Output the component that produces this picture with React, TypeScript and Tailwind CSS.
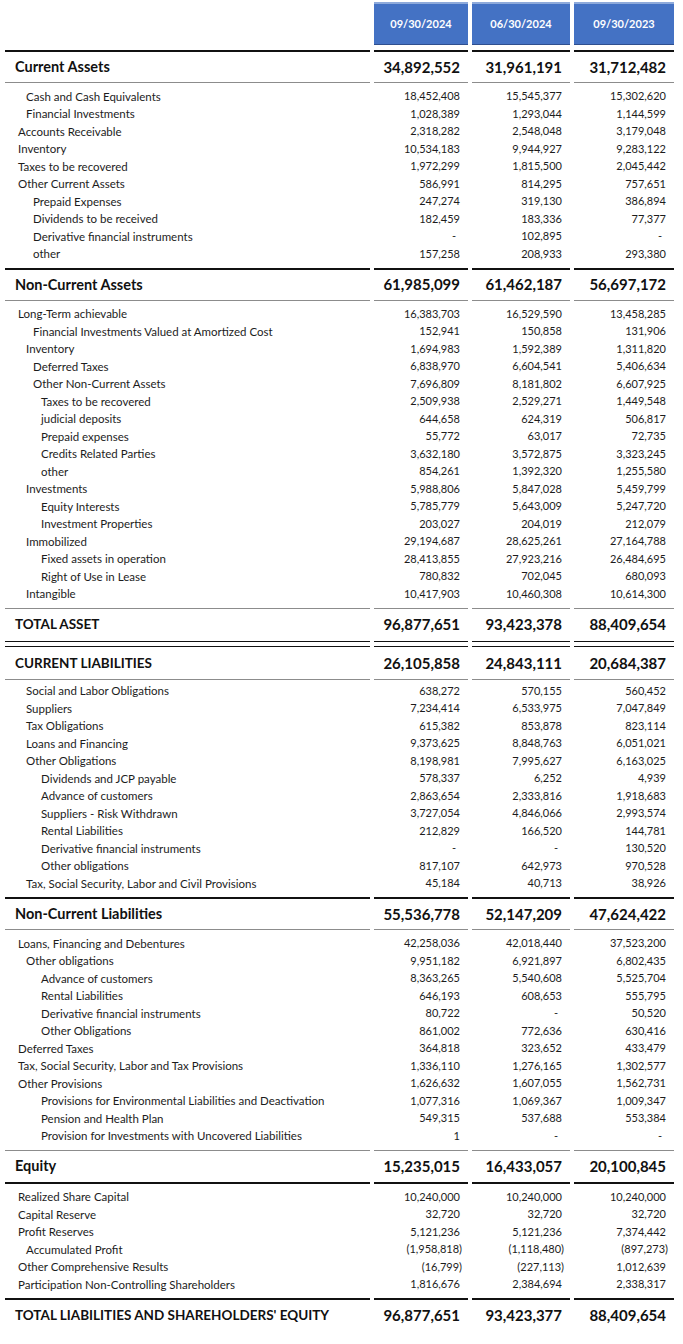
type Row = { label: string; level: number; v: string[] };
type Section = { title: string; total: string[]; top: "black" | "gray"; under: "black" | "gray"; rows: Row[] };

const COLS = "grid grid-cols-[365px_94px_98px_100px] gap-x-[4px]";
const INDENT = ["pl-[13px]", "pl-[21px]", "pl-[28px]", "pl-[36px]"];

const r = (level: number, label: string, a: string, b: string, c: string): Row => ({ label, level, v: [a, b, c] });

const sections: Section[] = [
  {
    title: "Current Assets",
    total: ["34,892,552", "31,961,191", "31,712,482"],
    top: "black",
    under: "gray",
    rows: [
      r(1, "Cash and Cash Equivalents", "18,452,408", "15,545,377", "15,302,620"),
      r(1, "Financial Investments", "1,028,389", "1,293,044", "1,144,599"),
      r(0, "Accounts Receivable", "2,318,282", "2,548,048", "3,179,048"),
      r(0, "Inventory", "10,534,183", "9,944,927", "9,283,122"),
      r(0, "Taxes to be recovered", "1,972,299", "1,815,500", "2,045,442"),
      r(0, "Other Current Assets", "586,991", "814,295", "757,651"),
      r(2, "Prepaid Expenses", "247,274", "319,130", "386,894"),
      r(2, "Dividends to be received", "182,459", "183,336", "77,377"),
      r(2, "Derivative financial instruments", "-", "102,895", "-"),
      r(2, "other", "157,258", "208,933", "293,380"),
    ],
  },
  {
    title: "Non-Current Assets",
    total: ["61,985,099", "61,462,187", "56,697,172"],
    top: "black",
    under: "gray",
    rows: [
      r(0, "Long-Term achievable", "16,383,703", "16,529,590", "13,458,285"),
      r(2, "Financial Investments Valued at Amortized Cost", "152,941", "150,858", "131,906"),
      r(1, "Inventory", "1,694,983", "1,592,389", "1,311,820"),
      r(2, "Deferred Taxes", "6,838,970", "6,604,541", "5,406,634"),
      r(2, "Other Non-Current Assets", "7,696,809", "8,181,802", "6,607,925"),
      r(3, "Taxes to be recovered", "2,509,938", "2,529,271", "1,449,548"),
      r(3, "judicial deposits", "644,658", "624,319", "506,817"),
      r(3, "Prepaid expenses", "55,772", "63,017", "72,735"),
      r(3, "Credits Related Parties", "3,632,180", "3,572,875", "3,323,245"),
      r(3, "other", "854,261", "1,392,320", "1,255,580"),
      r(1, "Investments", "5,988,806", "5,847,028", "5,459,799"),
      r(3, "Equity Interests", "5,785,779", "5,643,009", "5,247,720"),
      r(3, "Investment Properties", "203,027", "204,019", "212,079"),
      r(1, "Immobilized", "29,194,687", "28,625,261", "27,164,788"),
      r(3, "Fixed assets in operation", "28,413,855", "27,923,216", "26,484,695"),
      r(3, "Right of Use in Lease", "780,832", "702,045", "680,093"),
      r(1, "Intangible", "10,417,903", "10,460,308", "10,614,300"),
    ],
  },
];

const liabilities: Section[] = [
  {
    title: "CURRENT LIABILITIES",
    total: ["26,105,858", "24,843,111", "20,684,387"],
    top: "black",
    under: "gray",
    rows: [
      r(1, "Social and Labor Obligations", "638,272", "570,155", "560,452"),
      r(1, "Suppliers", "7,234,414", "6,533,975", "7,047,849"),
      r(1, "Tax Obligations", "615,382", "853,878", "823,114"),
      r(1, "Loans and Financing", "9,373,625", "8,848,763", "6,051,021"),
      r(1, "Other Obligations", "8,198,981", "7,995,627", "6,163,025"),
      r(3, "Dividends and JCP payable", "578,337", "6,252", "4,939"),
      r(3, "Advance of customers", "2,863,654", "2,333,816", "1,918,683"),
      r(3, "Suppliers - Risk Withdrawn", "3,727,054", "4,846,066", "2,993,574"),
      r(3, "Rental Liabilities", "212,829", "166,520", "144,781"),
      r(3, "Derivative financial instruments", "-", "-", "130,520"),
      r(3, "Other obligations", "817,107", "642,973", "970,528"),
      r(1, "Tax, Social Security, Labor and Civil Provisions", "45,184", "40,713", "38,926"),
    ],
  },
  {
    title: "Non-Current Liabilities",
    total: ["55,536,778", "52,147,209", "47,624,422"],
    top: "black",
    under: "gray",
    rows: [
      r(0, "Loans, Financing and Debentures", "42,258,036", "42,018,440", "37,523,200"),
      r(1, "Other obligations", "9,951,182", "6,921,897", "6,802,435"),
      r(3, "Advance of customers", "8,363,265", "5,540,608", "5,525,704"),
      r(3, "Rental Liabilities", "646,193", "608,653", "555,795"),
      r(3, "Derivative financial instruments", "80,722", "-", "50,520"),
      r(3, "Other Obligations", "861,002", "772,636", "630,416"),
      r(0, "Deferred Taxes", "364,818", "323,652", "433,479"),
      r(0, "Tax, Social Security, Labor and Tax Provisions", "1,336,110", "1,276,165", "1,302,577"),
      r(0, "Other Provisions", "1,626,632", "1,607,055", "1,562,731"),
      r(3, "Provisions for Environmental Liabilities and Deactivation", "1,077,316", "1,069,367", "1,009,347"),
      r(3, "Pension and Health Plan", "549,315", "537,688", "553,384"),
      r(3, "Provision for Investments with Uncovered Liabilities", "1", "-", "-"),
    ],
  },
  {
    title: "Equity",
    total: ["15,235,015", "16,433,057", "20,100,845"],
    top: "gray",
    under: "black",
    rows: [
      r(0, "Realized Share Capital", "10,240,000", "10,240,000", "10,240,000"),
      r(0, "Capital Reserve", "32,720", "32,720", "32,720"),
      r(0, "Profit Reserves", "5,121,236", "5,121,236", "7,374,442"),
      r(1, "Accumulated Profit", "(1,958,818)", "(1,118,480)", "(897,273)"),
      r(0, "Other Comprehensive Results", "(16,799)", "(227,113)", "1,012,639"),
      r(0, "Participation Non-Controlling Shareholders", "1,816,676", "2,384,694", "2,338,317"),
    ],
  },
];

function Rule({ tone }: { tone: "black" | "gray" }) {
  const c = tone === "black" ? "h-[2px] bg-[#111]" : "h-px bg-[#8c8c8c]";
  return (
    <div className={COLS}>
      {[0, 1, 2, 3].map((i) => (
        <div key={i} className={c} />
      ))}
    </div>
  );
}

function DoubleRule() {
  return (
    <div className={`${COLS} py-[1px]`}>
      {[0, 1, 2, 3].map((i) => (
        <div key={i} className="flex flex-col gap-[4px]">
          <div className="h-px bg-[#111]" />
          <div className="h-px bg-[#111]" />
        </div>
      ))}
    </div>
  );
}

// header row: 30px under a 2px black rule, 31px under a 1px rule
function TotalRow({ title, v, tall }: { title: string; v: string[]; tall?: boolean }) {
  const caps = title === title.toUpperCase();
  return (
    <div className={`${COLS} ${tall ? "h-[31px]" : "h-[30px]"} items-center font-bold text-[#111]`}>
      <div className={`pl-[10px] whitespace-nowrap ${caps ? "text-[13.5px]" : "text-[14.5px]"}`}>{title}</div>
      {v.map((x, i) => (
        <div key={i} className="text-right pr-[8px] text-[15px]">
          {x}
        </div>
      ))}
    </div>
  );
}

function DetailRow({ row }: { row: Row }) {
  return (
    <div className={`${COLS} h-[17.5px] items-center text-[#1c1c1c]`}>
      <div className={`${INDENT[row.level]} whitespace-nowrap text-[11.5px]`}>{row.label}</div>
      {row.v.map((x, i) => (
        <div key={i} className={`text-right text-[11px] ${x === "-" ? "pr-[12px]" : x.endsWith(")") ? "pr-[6px]" : "pr-[8px]"}`}>
          {x}
        </div>
      ))}
    </div>
  );
}

function Rows({ rows, tight }: { rows: Row[]; tight?: boolean }) {
  return (
    <div className={`${tight ? "pt-[2.5px]" : "pt-[4.5px]"} pb-[5px]`}>
      {rows.map((row, i) => (
        <DetailRow key={i} row={row} />
      ))}
    </div>
  );
}

function Block({ s }: { s: Section }) {
  return (
    <>
      <Rule tone={s.top} />
      <TotalRow title={s.title} v={s.total} tall={s.top === "gray"} />
      <Rule tone={s.under} />
      <Rows rows={s.rows} />
    </>
  );
}

export default function App() {
  return (
    <div className="bg-white min-h-screen w-[683px] pl-[5px] pt-[2px] font-['Lato','Open_Sans',sans-serif]">
      {/* column headers */}
      <div className={COLS}>
        <div />
        {["09/30/2024", "06/30/2024", "09/30/2023"].map((d) => (
          <div
            key={d}
            className="h-[43px] flex items-center justify-center bg-[#4472C4] border-t-2 border-t-[#8eaadb] border-b border-b-[#2f4f8f] text-white font-bold text-[11px]"
          >
            {d}
          </div>
        ))}
      </div>
      <div className="h-[5px]" />

      {sections.map((s) => (
        <Block key={s.title} s={s} />
      ))}

      <Rule tone="gray" />
      <TotalRow title="TOTAL ASSET" v={["96,877,651", "93,423,378", "88,409,654"]} tall />
      <DoubleRule />

      <TotalRow title={liabilities[0].title} v={liabilities[0].total} tall />
      <Rule tone="gray" />
      <Rows rows={liabilities[0].rows} tight />

      {liabilities.slice(1).map((s) => (
        <Block key={s.title} s={s} />
      ))}

      <Rule tone="black" />
      <TotalRow title="TOTAL LIABILITIES AND SHAREHOLDERS' EQUITY" v={["96,877,651", "93,423,377", "88,409,654"]} />
    </div>
  );
}
